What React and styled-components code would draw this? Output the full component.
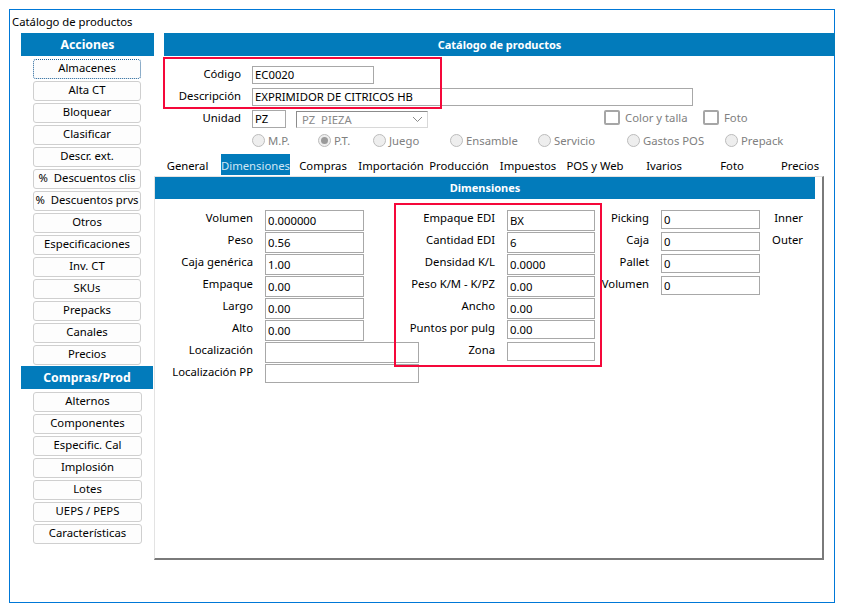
import React from 'react';
import styled, { createGlobalStyle } from 'styled-components';

const GlobalStyle = createGlobalStyle`
  html, body {
    margin: 0;
    padding: 0;
    background: #fff;
  }
  body {
    font-family: "Noto Sans", "Open Sans", sans-serif;
    font-size: 11.3px;
    color: #000;
  }
`;

const Window = styled.div`
  position: relative;
  box-sizing: border-box;
  width: 826px;
  height: 594px;
  margin: 9px 0 0 9px;
  border: 1px solid #0078d7;
`;

const Caption = styled.div`
  height: 23px;
  padding-left: 2px;
  line-height: 24px;
`;

const Body = styled.div`
  display: flex;
  padding-left: 11px;
`;

const Sidebar = styled.aside`
  flex: 0 0 133px;
  width: 133px;
`;

const SideHeader = styled.div`
  width: ${({ $w }) => $w}px;
  height: 23px;
  line-height: 24px;
  background: #027bbb;
  color: #fff;
  font-size: 12.3px;
  font-weight: 700;
  text-align: center;
`;

const ButtonList = styled.div`
  display: flex;
  flex-direction: column;
  gap: 2px;
  padding: 3px 0 1px 12px;
`;

const SideButton = styled.button`
  box-sizing: border-box;
  width: ${({ $w }) => $w}px;
  height: 20px;
  padding: 0 0 2px;
  border: 1px ${({ $focus }) => ($focus ? 'dotted #1d5f96' : 'solid #cfcfcf')};
  border-radius: 3px;
  background: #fdfdfd;
  color: #000;
  font: inherit;
  line-height: 16px;
  white-space: pre;
`;

const Main = styled.main`
  flex: 0 0 671px;
  width: 671px;
`;

const MainHeader = styled.div`
  width: 671px;
  height: 23px;
  margin-left: 10px;
  line-height: 24px;
  background: #027bbb;
  color: #fff;
  font-size: 11px;
  font-weight: 700;
  text-align: center;
`;

const TopForm = styled.div`
  display: flex;
  flex-direction: column;
  gap: 4px;
  padding-top: 10px;
`;

const FormRow = styled.div`
  display: flex;
  height: 18px;
`;

const RowLabel = styled.label`
  flex: 0 0 ${({ $w }) => $w}px;
  width: ${({ $w }) => $w}px;
  margin-right: 11px;
  line-height: 16px;
  text-align: right;
  white-space: nowrap;
`;

const TextBox = styled.input`
  box-sizing: border-box;
  flex: 0 0 ${({ $w }) => $w}px;
  width: ${({ $w }) => $w}px;
  height: ${({ $h }) => $h || 18}px;
  padding: 0 0 ${({ $h }) => ($h ? 0 : 1)}px 2px;
  border: 1px solid #a8a8a8;
  border-radius: 0;
  outline: none;
  background: #fff;
  color: #000;
  font: inherit;
`;

const Combo = styled.div`
  box-sizing: border-box;
  display: flex;
  align-items: center;
  justify-content: space-between;
  width: 132px;
  height: 17px;
  margin: 1px 0 0 10px;
  padding: 0 4px 1px 5px;
  border: 1px solid #d8d8d8;
  border-top-color: #8c8c8c;
  border-left-color: #8c8c8c;
  color: #8a8a8a;
  white-space: pre;
`;

const CheckOption = styled.div`
  display: flex;
  align-items: flex-start;
  gap: 5px;
  width: ${({ $w }) => $w}px;
  margin-left: ${({ $ml }) => $ml || 0}px;
  color: #808080;
  line-height: 16px;
`;

const CheckBox = styled.span`
  box-sizing: border-box;
  flex: 0 0 16px;
  height: 15px;
  border: 2px solid #a6a6a6;
  border-radius: 2px;
  background: #fff;
`;

const RadioRow = styled.div`
  display: flex;
  height: 18px;
  padding-left: 98px;
`;

const RadioOption = styled.div`
  display: flex;
  align-items: center;
  gap: 3px;
  flex: 0 0 ${({ $w }) => $w}px;
  padding-bottom: 1px;
  color: #808080;
  white-space: nowrap;
`;

const RadioDot = styled.span`
  box-sizing: border-box;
  display: flex;
  align-items: center;
  justify-content: center;
  flex: 0 0 13px;
  height: 13px;
  border: 1px solid #bcbcbc;
  border-radius: 50%;
  background: #eeeeee;

  &::after {
    content: '';
    display: ${({ $on }) => ($on ? 'block' : 'none')};
    width: 7px;
    height: 7px;
    border-radius: 50%;
    background: #9a9a9a;
  }
`;

const TabRow = styled.div`
  display: flex;
  height: 21px;
  margin-top: 4px;
`;

const Tab = styled.div`
  flex: 0 0 ${({ $w }) => $w}px;
  height: 21px;
  line-height: 24px;
  text-align: center;
  white-space: nowrap;
  color: ${({ $active }) => ($active ? '#cfe6f5' : '#000')};
  background: ${({ $active }) => ($active ? '#027bbb' : 'transparent')};
`;

const TabPanel = styled.section`
  box-sizing: border-box;
  width: 670px;
  height: 384px;
  margin-top: 1px;
  border: 1px solid #e3e3e3;
  border-right: 2px solid #7a7a7a;
  border-bottom: 2px solid #7a7a7a;
`;

const SectionHeader = styled.div`
  width: 660px;
  height: 22px;
  line-height: 21px;
  background: #027bbb;
  color: #fff;
  font-size: 11px;
  font-weight: 700;
  text-align: center;
`;

const FieldColumns = styled.div`
  display: flex;
  padding-top: 11px;
`;

const FieldColumn = styled.div`
  flex: 0 0 ${({ $w }) => $w}px;
  width: ${({ $w }) => $w}px;
`;

const FieldRow = styled.div`
  display: flex;
  height: 22px;
`;

const FieldLabel = styled.label`
  display: flex;
  justify-content: flex-end;
  flex: 0 0 ${({ $w }) => $w}px;
  width: ${({ $w }) => $w}px;
  margin-right: 12px;
  line-height: 16px;
  white-space: nowrap;
`;

const OuterNote = styled.div`
  height: 22px;
  line-height: 16px;
  text-align: right;
`;

const Highlight = styled.div`
  position: absolute;
  box-sizing: border-box;
  left: ${({ $x }) => $x}px;
  top: ${({ $y }) => $y}px;
  width: ${({ $w }) => $w}px;
  height: ${({ $h }) => $h}px;
  border: 2px solid #f5083a;
  pointer-events: none;
`;

const actions = [
  'Almacenes', 'Alta CT', 'Bloquear', 'Clasificar', 'Descr. ext.',
  '%  Descuentos clis', '%  Descuentos prvs', 'Otros', 'Especificaciones',
  'Inv. CT', 'SKUs', 'Prepacks', 'Canales', 'Precios',
];

const purchases = [
  'Alternos', 'Componentes', 'Especific. Cal', 'Implosión', 'Lotes',
  'UEPS / PEPS', 'Características',
];

const radios = [
  ['M.P.', 66], ['P.T.', 55, true], ['Juego', 77], ['Ensamble', 88],
  ['Servicio', 89], ['Gastos POS', 98], ['Prepack', 70],
];

const tabs = [
  ['General', 67], ['Dimensiones', 69, true], ['Compras', 66], ['Importación', 70],
  ['Producción', 66], ['Impuestos', 72], ['POS y Web', 62], ['Ivarios', 76],
  ['Foto', 60], ['Precios', 76],
];

const column1 = [
  ['Volumen', '0.000000', 99, 21], ['Peso', '0.56', 99, 21], ['Caja genérica', '1.00', 99, 21],
  ['Empaque', '0.00', 99, 21], ['Largo', '0.00', 99, 21], ['Alto', '0.00', 99, 21],
  ['Localización', '', 154, 21], ['Localización PP', '', 154, 19],
];

const column2 = [
  ['Empaque EDI', 'BX', 88, 21], ['Cantidad EDI', '6', 88, 21], ['Densidad K/L', '0.0000', 88, 21],
  ['Peso K/M - K/PZ', '0.00', 88, 21], ['Ancho', '0.00', 88, 21], ['Puntos por pulg', '0.00', 88, 19],
  ['Zona', '', 88, 19],
];

const column3 = [
  ['Picking', '0', 99, 19], ['Caja', '0', 99, 19], ['Pallet', '0', 99, 19], ['Volumen', '0', 99, 19],
];

function Fields({ rows, width, labelWidth }) {
	return (
		<FieldColumn $w={width}>
			{rows.map(([label, value, w, h]) => (
				<FieldRow key={label}>
					<FieldLabel $w={labelWidth}>{label}</FieldLabel>
					<TextBox $w={w} $h={h} value={value} readOnly />
				</FieldRow>
			))}
		</FieldColumn>
	);
}

function App() {
	return (
		<Window>
			<GlobalStyle />
			<Caption>Catálogo de productos</Caption>
			<Body>
				<Sidebar>
					<SideHeader $w={133}>Acciones</SideHeader>
					<ButtonList>
						{actions.map((name, i) => (
							<SideButton key={name} $w={108} $focus={i === 0}>{name}</SideButton>
						))}
					</ButtonList>
					<SideHeader $w={132}>Compras/Prod</SideHeader>
					<ButtonList>
						{purchases.map((name) => (
							<SideButton key={name} $w={109}>{name}</SideButton>
						))}
					</ButtonList>
				</Sidebar>
				<Main>
					<MainHeader>Catálogo de productos</MainHeader>
					<TopForm>
						<FormRow>
							<RowLabel $w={87}>Código</RowLabel>
							<TextBox $w={122} value="EC0020" readOnly />
						</FormRow>
						<FormRow>
							<RowLabel $w={87}>Descripción</RowLabel>
							<TextBox $w={441} value="EXPRIMIDOR DE CITRICOS HB" readOnly />
						</FormRow>
						<FormRow>
							<RowLabel $w={87}>Unidad</RowLabel>
							<TextBox $w={34} value="PZ" readOnly />
							<Combo>
								<span>PZ  PIEZA</span>
								<svg width="11" height="7" viewBox="0 0 11 7" fill="none" stroke="#8a8a8a">
									<path d="M1 1l4.5 4.5L10 1" />
								</svg>
							</Combo>
							<CheckOption $w={99} $ml={176}>
								<CheckBox />
								Color y talla
							</CheckOption>
							<CheckOption $w={60}>
								<CheckBox />
								Foto
							</CheckOption>
						</FormRow>
						<RadioRow>
							{radios.map(([name, w, on]) => (
								<RadioOption key={name} $w={w}>
									<RadioDot $on={on} />
									{name}
								</RadioOption>
							))}
						</RadioRow>
					</TopForm>
					<TabRow>
						{tabs.map(([name, w, active]) => (
							<Tab key={name} $w={w} $active={active}>{name}</Tab>
						))}
					</TabRow>
					<TabPanel>
						<SectionHeader>Dimensiones</SectionHeader>
						<FieldColumns>
							<Fields rows={column1} width={240} labelWidth={98} />
							<Fields rows={column2} width={200} labelWidth={100} />
							<Fields rows={column3} width={165} labelWidth={54} />
							<FieldColumn $w={43}>
								<OuterNote>Inner</OuterNote>
								<OuterNote>Outer</OuterNote>
							</FieldColumn>
						</FieldColumns>
					</TabPanel>
				</Main>
			</Body>
			<Highlight $x={153} $y={47} $w={279} $h={52} />
			<Highlight $x={384} $y={193} $w={208} $h={164} />
		</Window>
	);
}

export default App;
